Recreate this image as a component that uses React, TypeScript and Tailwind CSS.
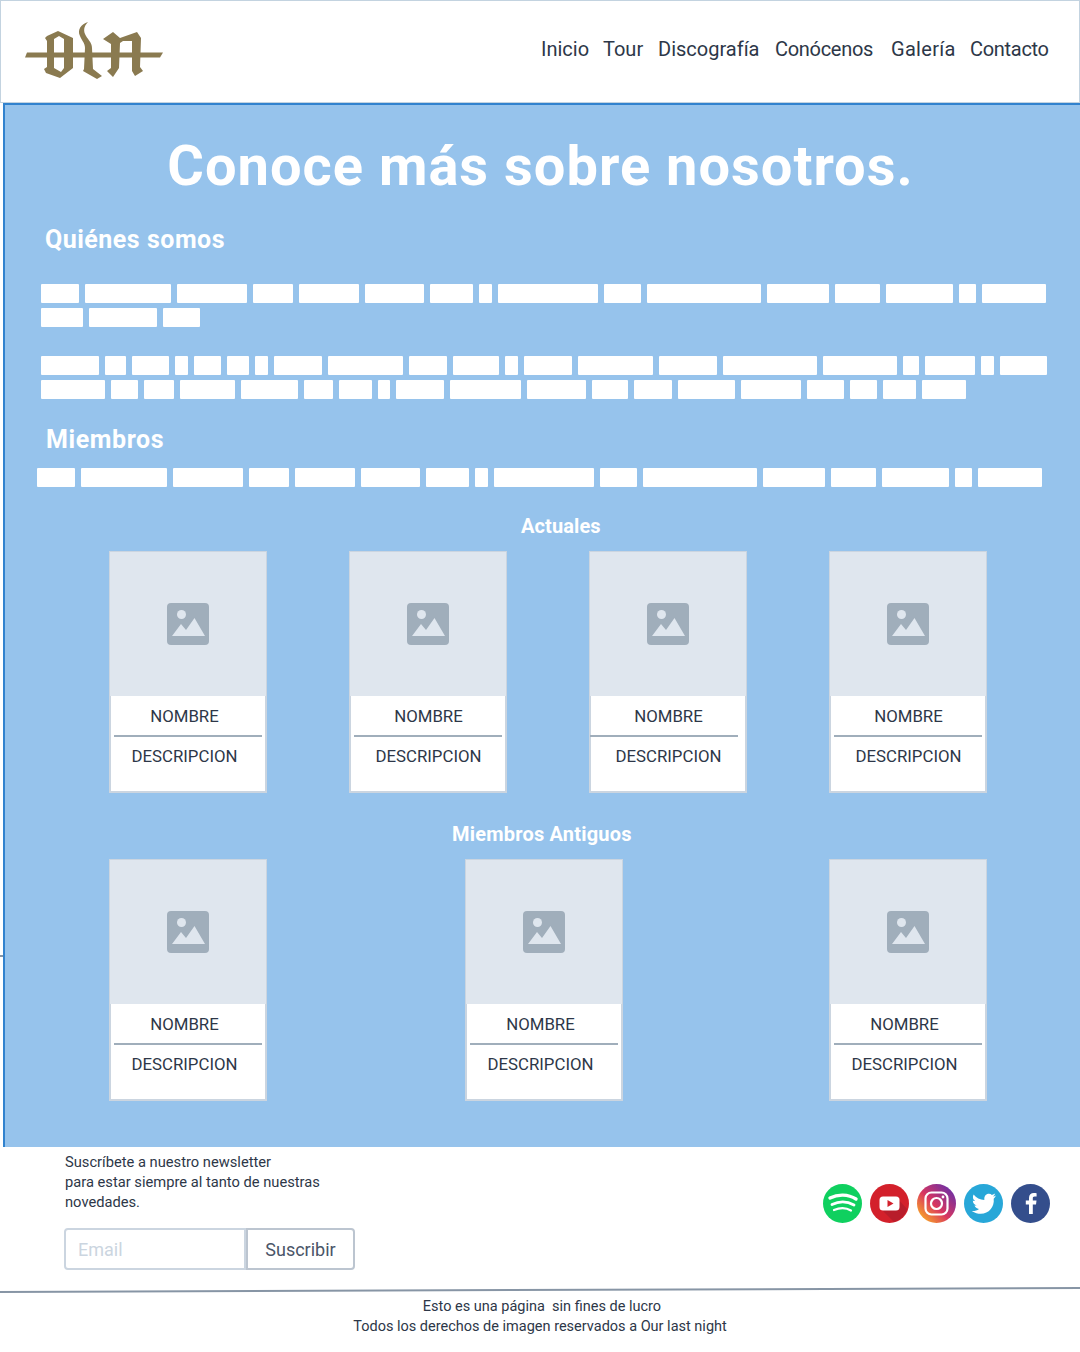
const mainFont = "font-['Roboto',sans-serif]";

const row1 = [38, 86, 70, 40, 60, 59, 43, 13, 100, 37, 114, 62, 45, 67, 17, 64];
const row2 = [42, 68, 37];
const row3 = [58, 21, 37, 13, 27, 22, 13, 48, 75, 38, 46, 13, 48, 75, 58, 94, 74, 16, 50, 13, 47];
const row4 = [64, 27, 30, 55, 57, 29, 33, 12, 48, 71, 59, 36, 38, 57, 60, 37, 27, 33, 44];

function Bars({ widths, className }: { widths: number[]; className?: string }) {
  return (
    <div className={`flex h-[19px] gap-[6px] ${className ?? ""}`}>
      {widths.map((w, i) => (
        <span key={i} className="block h-full rounded-[1px] bg-white" style={{ width: w }} />
      ))}
    </div>
  );
}

function MemberCard({ textLeft, ruleLeft }: { textLeft?: boolean; ruleLeft?: boolean }) {
  const textClass = textLeft ? "pr-[7px]" : "pl-[1px]";
  return (
    <div className="h-[242px] w-[158px] border-2 border-[#cbd5e0] bg-white">
      <div className="-mx-[1px] -mt-[1px] flex h-[144px] w-[156px] items-center justify-center bg-[#dfe6ee]">
        <svg width="42" height="42" viewBox="0 0 42 42">
          <rect width="42" height="42" rx="4" fill="#a0aebb" />
          <circle cx="14.5" cy="11.5" r="4.5" fill="#dfe6ee" />
          <path d="M5 33 L14 21 L19 27 L27.5 15 L38 33 Z" fill="#dfe6ee" />
        </svg>
      </div>
      <p className={`h-[39px] pt-[8px] text-center text-[16.8px] leading-[24px] text-[#2d3748] ${textClass}`}>NOMBRE</p>
      <div className={`h-[2px] w-[148px] bg-[#a0aebb] ${ruleLeft ? "-ml-[1px]" : "ml-[3px]"}`} />
      <p className={`pt-[7px] text-center text-[16.8px] leading-[24px] text-[#2d3748] ${textClass}`}>DESCRIPCION</p>
    </div>
  );
}

function Logo() {
  return (
    <svg width="138" height="60" viewBox="25 19 138 60" className="block">
      <g fill="#8a7a50">
        <path d="M27 51.5 L163 51.5 L160 56.5 L25 56.5 Z" />
        {/* o */}
        <path
          d="M47 35 L58 30 L73 37 L73 67 L60 77 L46 72 L44 68 L47 66 L47 40 L45 37 Z M54 38 L54 67 L61 71 L64 67 L64 38 L59 35 Z"
          fillRule="evenodd"
        />
        {/* l */}
        <path d="M88 21 C81 23 77 29 80 35 C82 40 85 42 85 47 L84 68 L83 70 L97 78 L102 75 L93 68 L92 47 C92 41 87 38 85 33 C83 28 85 24 88 21 Z" />
        {/* n */}
        <path d="M103 38 L113 31 L120 37 L137 31 L141 37 L140 66 L143 70 L135 75 L132 70 L132 40 L123 40 L120 42 L119 67 L113 76 L107 70 L111 67 L111 43 Z" />
      </g>
    </svg>
  );
}

function SocialIcons() {
  return (
    <div className="flex gap-[8px]">
      <svg width="39" height="39" viewBox="0 0 39 39">
        <circle cx="19.5" cy="19.5" r="19.5" fill="#0fd05f" />
        <g fill="none" stroke="#fff" strokeLinecap="round">
          <path d="M7 14 C15 10 25 10 33 15" strokeWidth="3.4" />
          <path d="M9 20.5 C16 17 24 17 31 21" strokeWidth="2.8" />
          <path d="M11 26 C17 23.5 23 23.5 28 26.5" strokeWidth="2.2" />
        </g>
      </svg>
      <svg width="39" height="39" viewBox="0 0 39 39">
        <circle cx="19.5" cy="19.5" r="19.5" fill="#d3202b" />
        <path d="M13 27 L27 14 L37 25 A19.5 19.5 0 0 1 24 38 Z" fill="#b81d2b" />
        <rect x="9.5" y="12.5" width="20" height="14" rx="3.5" fill="#fff" />
        <path d="M17.5 16 L23.5 19.5 L17.5 23 Z" fill="#d3202b" />
      </svg>
      <svg width="39" height="39" viewBox="0 0 39 39">
        <defs>
          <linearGradient id="ig" x1="0.1" y1="0.9" x2="0.9" y2="0.1">
            <stop offset="0" stopColor="#f9a826" />
            <stop offset="0.45" stopColor="#d9365f" />
            <stop offset="1" stopColor="#6a2fa8" />
          </linearGradient>
        </defs>
        <circle cx="19.5" cy="19.5" r="19.5" fill="url(#ig)" />
        <rect x="8.5" y="8.5" width="22" height="22" rx="6" fill="none" stroke="#fff" strokeWidth="2.2" />
        <circle cx="19.5" cy="19.5" r="5.5" fill="none" stroke="#fff" strokeWidth="2.2" />
        <circle cx="26" cy="13" r="1.4" fill="#fff" />
      </svg>
      <svg width="39" height="39" viewBox="0 0 39 39">
        <circle cx="19.5" cy="19.5" r="19.5" fill="#28a7d8" />
        <path d="M32 11.5 C31 12 30 12.4 29 12.5 C30 11.8 30.8 10.8 31.2 9.6 C30.2 10.2 29.1 10.6 27.9 10.9 C25.5 8.4 20.2 9.8 20.3 14.9 C20.3 15.3 20.3 15.6 20.4 15.9 C16 15.7 12.2 13.6 9.6 10.4 C8.3 12.7 8.9 15.6 11.1 17.1 C10.2 17.1 9.5 16.9 8.8 16.5 C8.8 18.9 10.5 20.9 12.7 21.4 C12 21.6 11.2 21.6 10.5 21.5 C11.1 23.4 12.9 24.8 15 24.9 C12.9 26.5 10.4 27.2 7.7 26.9 C20 34.5 31 25.5 29.7 14.7 C30.6 13.8 31.4 12.8 32 11.5 Z" fill="#fff" />
      </svg>
      <svg width="39" height="39" viewBox="0 0 39 39">
        <circle cx="19.5" cy="19.5" r="19.5" fill="#344e8c" />
        <path d="M21.8 30 L21.8 20.4 L25 20.4 L25.5 16.6 L21.8 16.6 L21.8 14.4 C21.8 13.3 22.2 12.6 23.7 12.6 L25.6 12.6 L25.6 9.2 C25.2 9.1 24.1 9 22.8 9 C20 9 18 10.7 18 13.9 L18 16.6 L14.8 16.6 L14.8 20.4 L18 20.4 L18 30 Z" fill="#fff" />
      </svg>
    </div>
  );
}

export default function App() {
  const navItems = [
    { label: "Inicio", className: "w-[62px]" },
    { label: "Tour", className: "w-[55px]" },
    { label: "Discografía", className: "w-[117px]" },
    { label: "Conócenos", className: "w-[116px] tracking-[-0.3px]" },
    { label: "Galería", className: "w-[79px] tracking-[0.3px]" },
    { label: "Contacto", className: "w-[79px] tracking-[-0.3px]" },
  ];

  return (
    <div className={`relative h-[1352px] w-[1080px] overflow-hidden bg-white ${mainFont}`}>
      {/* Header */}
      <header className="flex h-[103px] items-start justify-between border border-[#c3d3e0] pl-[24px] pr-[30px]">
        <div className="pt-[19px]">
          <Logo />
        </div>
        <nav className="flex pt-[35px] text-[20px] leading-[26px] text-[#2d3748]">
          {navItems.map((n) => (
            <a key={n.label} className={`block whitespace-nowrap ${n.className}`}>
              {n.label}
            </a>
          ))}
        </nav>
      </header>

      {/* Conocenos */}
      <main className="ml-[3px] h-[1044px] border-l-2 border-t-2 border-[#3182ce] bg-[#96c3ec] text-white">
        <h1 className="pr-[4px] pt-[28px] text-center text-[56px] font-bold leading-[66px] tracking-[1px]">Conoce más sobre nosotros.</h1>
        <h2 className="ml-[40px] mt-[25px] text-[25px] font-bold leading-[32px] tracking-[0.5px]">Quiénes somos</h2>

        <div className="ml-[36px] mt-[28px] flex flex-col gap-[5px]">
          <Bars widths={row1} />
          <Bars widths={row2} />
        </div>
        <div className="ml-[36px] mt-[29px] flex flex-col gap-[5px]">
          <Bars widths={row3} />
          <Bars widths={row4} />
        </div>

        <h2 className="ml-[41px] mt-[25px] text-[25px] font-bold leading-[32px] tracking-[0.6px]">Miembros</h2>
        <Bars widths={row1} className="ml-[32px] mt-[12px]" />

        <h3 className="ml-[516px] mt-[26px] text-[20px] font-bold leading-[26px] tracking-[0.1px]">Actuales</h3>
        <div className="ml-[104px] mt-[12px] flex gap-[82px]">
          <MemberCard textLeft />
          <MemberCard />
          <MemberCard ruleLeft />
          <MemberCard />
        </div>

        <h3 className="ml-[447px] mt-[28px] text-[20px] font-bold leading-[26px] tracking-[0.2px]">Miembros Antiguos</h3>
        <div className="ml-[104px] mt-[12px] flex">
          <MemberCard textLeft />
          <div className="ml-[198px]">
            <MemberCard textLeft />
          </div>
          <div className="ml-[206px]">
            <MemberCard textLeft />
          </div>
        </div>
      </main>

      {/* Footer */}
      <footer className="text-[#2d3748]">
        <div className="flex items-start justify-between pl-[65px] pr-[30px]">
          <div>
            <p className="w-[280px] pt-[5px] text-[14.7px] leading-[20px]">
              Suscríbete a nuestro newsletter
              <br />
              para estar siempre al tanto de nuestras
              <br />
              novedades.
            </p>
            <form className="-ml-[1px] mt-[16px] flex h-[42px]">
              <input
                placeholder="Email"
                className="w-[182px] rounded-l-[4px] border-2 border-[#cbd5e0] pl-[12px] text-[18px] placeholder:text-[#cbd5e0]"
              />
              <button type="button" className="w-[109px] rounded-r-[4px] border-2 border-[#bcc5d0] text-[18px] text-[#4a5568]">
                Suscribir
              </button>
            </form>
          </div>
          <div className="pt-[37px]">
            <SocialIcons />
          </div>
        </div>
        <div className="mt-[19px] h-[2px] w-full -rotate-[0.2deg] bg-[#8795a5]" />
        <div className="pt-[6px] text-center text-[14.5px] leading-[20px]">
          <p className="pl-[4px]">Esto es una página&nbsp; sin fines de lucro</p>
          <p>Todos los derechos de imagen reservados a Our last night</p>
        </div>
      </footer>

      {/* little tick left of the panel */}
      <span className="absolute left-0 top-[955px] h-[2px] w-[3px] bg-[#8795a5]" />
    </div>
  );
}
